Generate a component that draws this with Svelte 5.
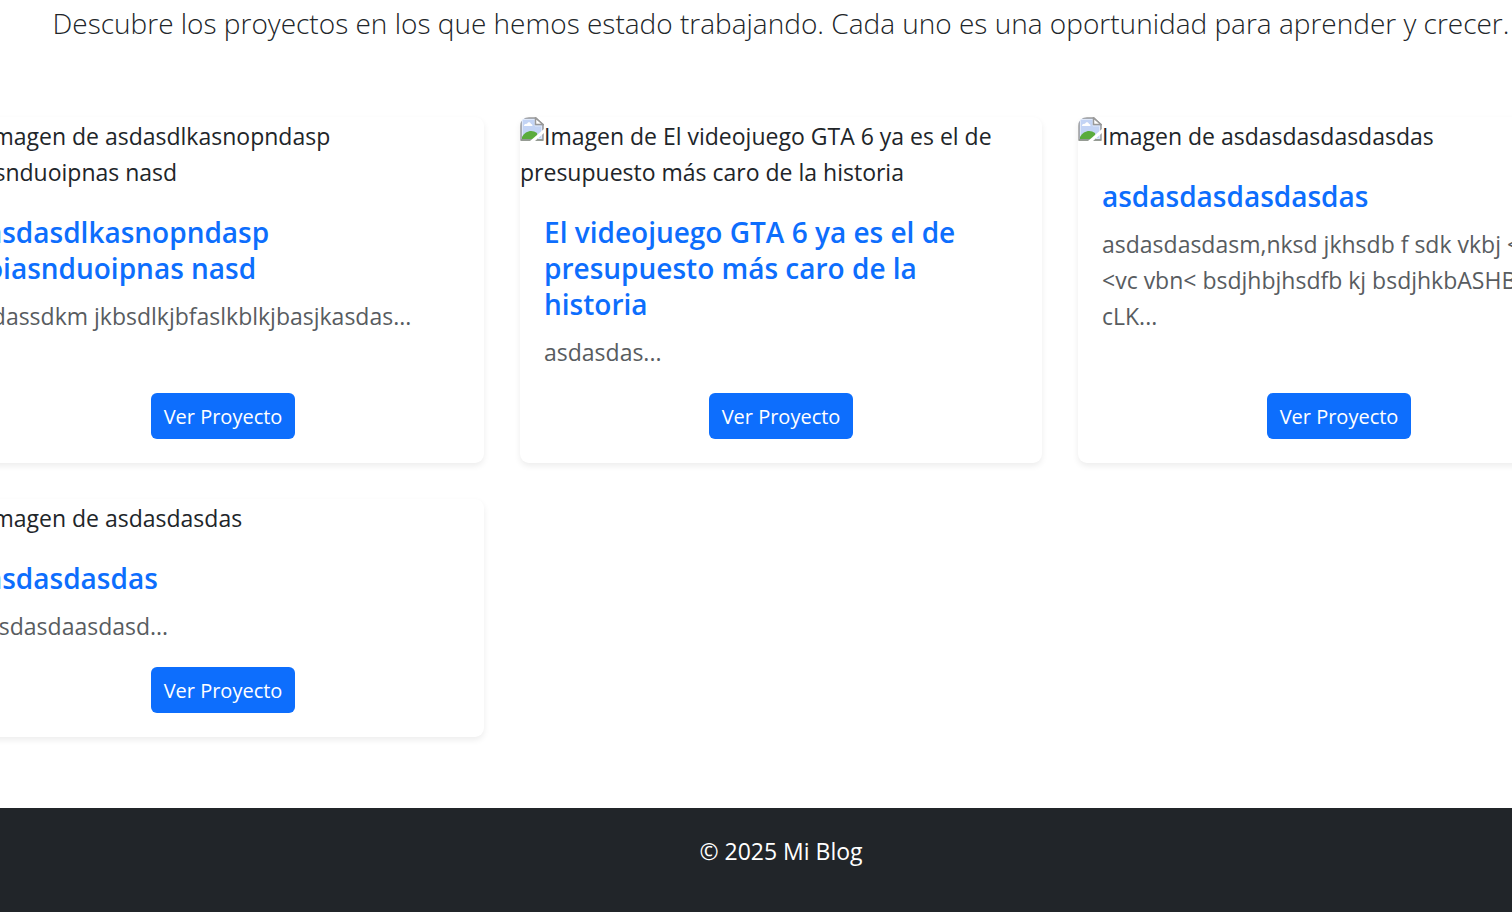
<script>
  const projects = [
    {
      title: 'asdasdlkasnopndasp oiasnduoipnas nasd',
      text: 'jdassdkm jkbsdlkjbfaslkblkjbasjkasdas...'
    },
    {
      title: 'El videojuego GTA 6 ya es el de presupuesto más caro de la historia',
      text: 'asdasdas...'
    },
    {
      title: 'asdasdasdasdasdas',
      text: 'asdasdasdasm,nksd jkhsdb f sdk vkbj < <vc\u00a0vbn< bsdjhbjhsdfb kj bsdjhkbASHB cLK...'
    },
    {
      title: 'asdasdasdas',
      text: 'asdasdaasdasd...'
    }
  ];
</script>

<div class="viewport">
  <div class="page">
    <main>
      <p class="lead">
        Descubre los proyectos en los que hemos estado trabajando. Cada uno es una oportunidad para aprender y crecer.
      </p>
      <div class="grid">
        {#each projects as project}
          <article class="card">
            <div class="cover">
              <svg class="broken" viewBox="0 0 24 24" aria-hidden="true">
                <path d="M1 1H16L23 8V23H1Z" fill="#c3d4f5" stroke="#9b9b9b" stroke-width="1.5" />
                <path d="M2.500 2.500H15V9H21.500V21.500H2.500Z" fill="none" stroke="#dfe8f9" />
                <path d="M4 9C4 7 6 6.500 7 7C7.500 4.500 10.500 4.500 11 7C12.500 7 13 9 12 9Z" fill="#fff" />
                <path d="M2 22V20C5 14 12 12 17 16L18 22Z" fill="#5aac3c" />
                <path d="M1 23H23" stroke="#8d958a" stroke-width="1.5" />
                <path d="M15.500 1V7.500H23Z" fill="#fff" stroke="#999" stroke-width="1.5" />
                <path d="M24 12L10 24H15L24 16Z" fill="#fff" />
              </svg>Imagen de {project.title}
            </div>
            <div class="body">
              <h2>{project.title}</h2>
              <p>{project.text}</p>
              <a class="button" href="#proyecto">Ver Proyecto</a>
            </div>
          </article>
        {/each}
      </div>
    </main>
    <footer>© 2025 Mi Blog</footer>
  </div>
</div>

<style>
  :global(body) {
    margin: 0;
    background: #fff;
  }
  .viewport {
    overflow: hidden;
    min-height: 100vh;
    display: flex;
    flex-direction: column;
    color: #212529;
    font-family: "Open Sans", sans-serif;
    font-size: 23px;
    line-height: 36px;
  }
  .page {
    flex: 1;
    display: flex;
    flex-direction: column;
    margin: 0 -88px 0 -38px;
  }
  main {
    padding: 1px 0 71px;
  }
  .lead {
    margin: 0 0 71px;
    font-size: 28px;
    font-weight: 300;
    line-height: 45px;
    text-align: center;
    white-space: nowrap;
  }
  .grid {
    display: grid;
    grid-template-columns: repeat(3, minmax(0, 1fr));
    gap: 36px;
  }
  .card {
    display: flex;
    flex-direction: column;
    border-radius: 9px;
    background: #fff;
    box-shadow: 0 3px 6px rgba(0, 0, 0, 0.075);
    overflow-wrap: break-word;
  }
  .cover {
    padding-top: 1px;
  }
  .broken {
    width: 24px;
    height: 24px;
    float: left;
    margin-top: -1px;
    border-top-left-radius: 9px;
  }
  .body {
    flex: 1;
    display: flex;
    flex-direction: column;
    padding: 24px;
  }
  h2 {
    margin: 0 0 12px;
    color: #0d6efd;
    font-size: 28px;
    font-weight: 600;
    line-height: 36px;
  }
  .body p {
    margin: 0 0 23px;
    color: #585c5f;
  }
  .button {
    align-self: center;
    margin-top: auto;
    padding: 8px 13px 6px;
    border-radius: 6px;
    background: #0d6efd;
    color: #fff;
    font-size: 20px;
    line-height: 32px;
    text-decoration: none;
  }
  footer {
    flex: 1;
    padding: 25px 24px 24px;
    background: #212529;
    color: #fff;
    text-align: center;
  }
</style>
